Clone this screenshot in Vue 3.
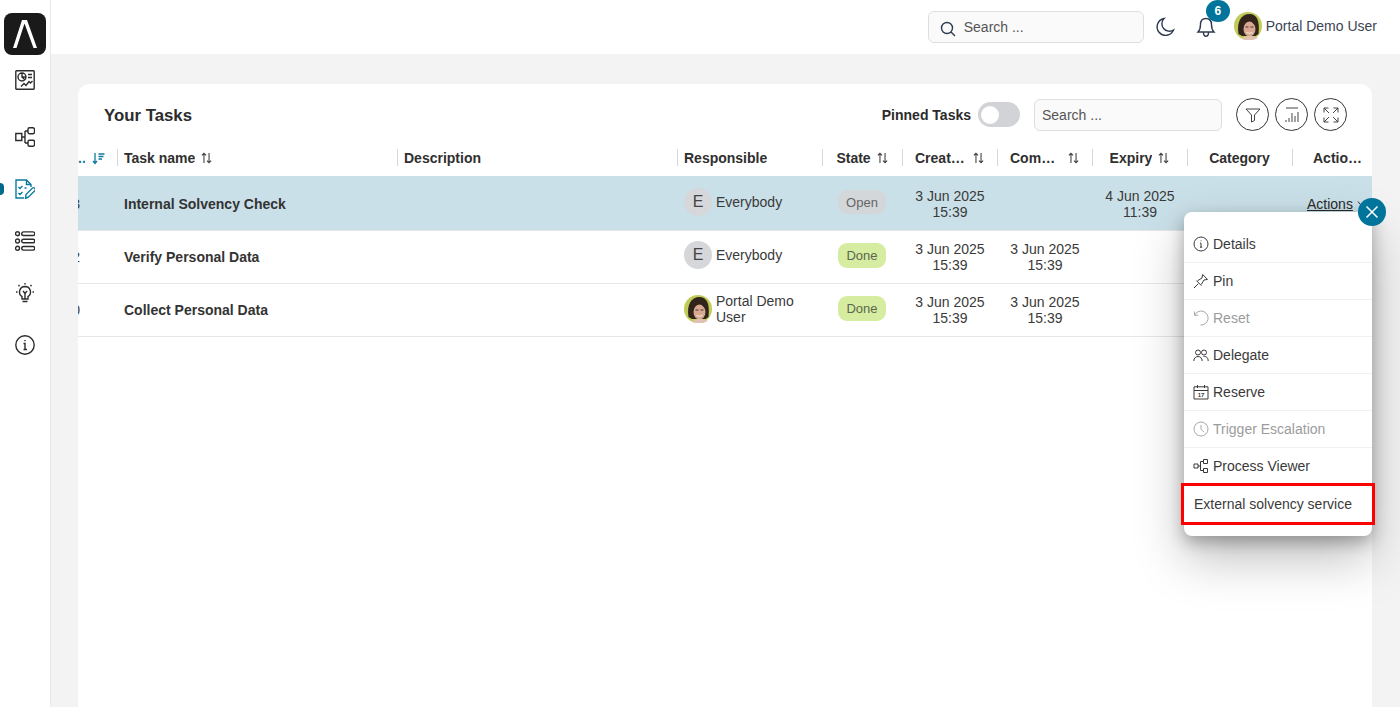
<template>
  <div class="app">
    <!-- shared portrait, used in the header and the table -->
    <svg class="defs" width="0" height="0">
      <symbol id="portrait" viewBox="0 0 28 28">
        <circle cx="14" cy="14" r="14" fill="#c0cb58" />
        <path d="M4.500 22C2.500 10 7 2 15.500 2c7 0 10.500 6 9 20l-3 2H8z" fill="#33241b" />
        <ellipse cx="15.500" cy="17" rx="6" ry="7.500" fill="#d8a892" />
        <path d="M9 15c1-4 4-5.500 7-6.500 2 2 4 3 6 6.500l1-6-5-4h-6l-4 4z" fill="#33241b" />
        <path d="M11.500 15h3M16.500 15h3" stroke="#4a3428" stroke-width="1" />
        <path d="M12.500 20.500q3 1.500 6 0" stroke="#f3e9e2" stroke-width="1" fill="none" />
        <path d="M8 27c1-2 4-3 8-3s7 1 8 2l-5 2h-8z" fill="#e0c2b2" />
      </symbol>
    </svg>

    <aside class="sidebar">
      <div class="logo">
        <svg width="24" height="30" viewBox="0 0 24 30">
          <path d="M0 29L9 1h5l10 28h-3.500L11.500 4.500 3.500 29z" fill="#fff" />
        </svg>
      </div>
      <nav class="side-nav">
        <div v-for="item in sideItems" :key="item.name" class="side-item" :class="{ active: item.active }">
          <svg width="20" height="20" viewBox="0 0 20 20" class="side-icon">
            <path :d="item.d" />
          </svg>
        </div>
      </nav>
    </aside>

    <div class="main">
      <header class="topbar">
        <div class="top-search">
          <svg width="16" height="16" viewBox="0 0 16 16" class="dark-icon search-icon">
            <path d="M7 1.500a5.500 5.500 0 1 0 0 11a5.500 5.500 0 1 0 0-11zM11 11l4 4" />
          </svg>
          <span>Search ...</span>
        </div>
        <svg width="22" height="22" viewBox="0 0 22 22" class="dark-icon moon">
          <path d="M10 2.500a8.500 8.500 0 1 0 9.500 11.500a7.500 7.500 0 0 1-9.500-11.500z" />
        </svg>
        <div class="bell">
          <svg width="22" height="22" viewBox="0 0 22 22" class="dark-icon">
            <path d="M11 2.500c-3.500 0-5.500 2.500-5.500 6c0 4-1 6-2.500 7.500h16c-1.500-1.500-2.500-3.500-2.500-7.500c0-3.500-2-6-5.500-6zM8.500 16.500c0 5 5 5 5 0" />
          </svg>
          <span class="bell-count">6</span>
        </div>
        <svg class="avatar" viewBox="0 0 28 28"><use href="#portrait" /></svg>
        <span class="user-name">Portal Demo User</span>
      </header>

      <main class="content">
        <section class="card">
          <div class="card-head">
            <h1>Your Tasks</h1>
            <span class="pinned">Pinned Tasks</span>
            <span class="toggle"><i></i></span>
            <div class="card-search">Search ...</div>
            <div class="round-btns">
              <button v-for="b in roundButtons" :key="b.name" class="round-btn">
                <svg width="18" height="18" viewBox="0 0 18 18"><path :d="b.d" /></svg>
              </button>
            </div>
          </div>

          <div class="table">
            <div class="row head">
              <div class="th th-id">
                <span class="id-dots">..</span>
                <svg width="13" height="13" viewBox="0 0 13 13" class="sort-active">
                  <path d="M3 1v10M1 9l2 2.500L5 9M6.500 2h6M6.500 4.500h5M6.500 7h3.500" />
                </svg>
              </div>
              <div v-for="col in columns" :key="col.label" class="th" :class="col.cls">
                <span class="th-label" :style="col.w ? { width: col.w + 'px' } : null">{{ col.label }}</span>
                <svg v-if="col.sort" width="11" height="12" viewBox="0 0 13 14" class="sort">
                  <path d="M3.500 13V1.500M1 4l2.500-2.500L6 4M9.500 1v11.500M7 10l2.500 2.500L12 10" />
                </svg>
              </div>
            </div>

            <div v-for="task in tasks" :key="task.id" class="row body" :class="{ selected: task.selected }">
              <div class="td td-id">{{ task.id }}</div>
              <div class="td task-name">{{ task.name }}</div>
              <div class="td"></div>
              <div class="td responsible" :class="{ photo: task.photo }">
                <svg v-if="task.photo" class="avatar" viewBox="0 0 28 28"><use href="#portrait" /></svg>
                <span v-else class="letter">E</span>
                <span>{{ task.responsible }}</span>
              </div>
              <div class="td center state-cell">
                <span class="state" :class="task.state.toLowerCase()">{{ task.state }}</span>
              </div>
              <div class="td center date">{{ task.created }}</div>
              <div class="td center date">{{ task.completed }}</div>
              <div class="td center date">{{ task.expiry }}</div>
              <div class="td"></div>
              <div class="td actions">
                <span v-if="task.selected" class="actions-link">Actions</span>
                <svg v-if="task.selected" width="10" height="8" viewBox="0 0 10 8" class="chev"><path d="M1 1.500l4 5 4-5" /></svg>
              </div>
            </div>
          </div>

          <!-- open action menu -->
          <div class="menu">
            <button class="menu-close">
              <svg width="14" height="14" viewBox="0 0 14 14"><path d="M1.500 1.500l11 11M12.500 1.500l-11 11" /></svg>
            </button>
            <div v-for="item in menuItems" :key="item.label" class="menu-item" :class="{ disabled: item.disabled }">
              <svg width="16" height="16" viewBox="0 0 16 16">
                <path :d="item.d" />
                <text v-if="item.day" x="8" y="13" text-anchor="middle" class="cal-day">{{ item.day }}</text>
              </svg>
              <span>{{ item.label }}</span>
            </div>
            <div class="menu-item external">External solvency service</div>
          </div>
        </section>
      </main>
    </div>
  </div>
</template>

<script setup>
const sideItems = [
  { name: 'dashboard', d: 'M1.500.8h17a.7.7 0 0 1 .7.7v17a.7.7 0 0 1-.7.7h-17a.7.7 0 0 1-.7-.7v-17a.7.7 0 0 1 .7-.7zM7 3a4 4 0 1 0 0 8a4 4 0 1 0 0-8zM7 3v4h4M7 7l2.800 2.800M13 4.500h4M13 7.500h4M6 16.500l3-3 2 2 3-4 1.500 1.500 2-2' },
  { name: 'process', d: 'M.8 6.500h6v7h-6zM6.800 10H10M10 4v12M10 4h3M10 16h3M14.500.8h3.500a1.500 1.500 0 0 1 1.500 1.500v3a1.500 1.500 0 0 1-1.500 1.500h-3.500a1.500 1.500 0 0 1-1.500-1.500v-3a1.500 1.500 0 0 1 1.500-1.500zM14.500 13.200h3.500a1.500 1.500 0 0 1 1.500 1.500v3a1.500 1.500 0 0 1-1.500 1.500h-3.500a1.500 1.500 0 0 1-1.500-1.500v-3a1.500 1.500 0 0 1 1.500-1.500z' },
  { name: 'tasks', active: true, d: 'M9 19H1V1h10.500L16 5.500V8M11.500 1v4.500H16M3.500 8l1.500 1.500 2.500-2.500M3.500 14l1.500 1.500 2.500-2.500M9.500 9h2M10.500 19.500l.5-4 6.500-6.500a1.800 1.800 0 0 1 2.500 2.500l-6.500 6.500z' },
  { name: 'list', d: 'M2.500.7a2 2 0 1 0 0 4a2 2 0 1 0 0-4zM2.500 8a2 2 0 1 0 0 4a2 2 0 1 0 0-4zM2.500 15.300a2 2 0 1 0 0 4a2 2 0 1 0 0-4zM8.500.9h9.500a1.800 1.800 0 0 1 0 3.600h-9.500a1.800 1.800 0 0 1 0-3.600zM8.500 8.200h9.500a1.800 1.800 0 0 1 0 3.600h-9.500a1.800 1.800 0 0 1 0-3.600zM8.500 15.500h9.500a1.800 1.800 0 0 1 0 3.600h-9.500a1.800 1.800 0 0 1 0-3.600z' },
  { name: 'ideas', d: 'M10 3.500a5.500 5.500 0 0 0-3 10.100V16h6v-2.400a5.500 5.500 0 0 0-3-10.100zM7.500 18.500h5M8 8l2 2.500L12 8M10 10.500V16M10 0v1.500M3.500 2l1 1.200M16.500 2l-1 1.200M1 9h1.500M17.500 9H19' },
  { name: 'info', d: 'M10 .8a9.200 9.200 0 1 0 0 18.400a9.200 9.200 0 1 0 0-18.400zM8.500 8.500H10v6M8.500 14.500h3.500M10 5v1.300' },
]

const roundButtons = [
  { name: 'filter', d: 'M2 3h14l-5.500 6v5.500l-3 1.500V9z' },
  { name: 'columns', d: 'M3 2h12M3 16v-2M6 16v-4M9 16V7M12 16v-6M15 16V6' },
  { name: 'expand', d: 'M2 2h4.500M2 2v4.500M2 2l5 5M16 2h-4.500M16 2v4.500M16 2l-5 5M2 16h4.500M2 16v-4.500M2 16l5-5M16 16h-4.500M16 16v-4.500M16 16l-5-5' },
]

const columns = [
  { label: 'Task name', cls: 'left', sort: true },
  { label: 'Description', cls: 'left' },
  { label: 'Responsible', cls: 'left' },
  { label: 'State', sort: true },
  { label: 'Created on', sort: true, w: 52 },
  { label: 'Completed on', sort: true, w: 52 },
  { label: 'Expiry', sort: true },
  { label: 'Category' },
  { label: 'Actions', w: 50 },
]

const tasks = [
  { id: '3', name: 'Internal Solvency Check', responsible: 'Everybody', state: 'Open', created: '3 Jun 2025\n15:39', completed: '', expiry: '4 Jun 2025\n11:39', selected: true },
  { id: '2', name: 'Verify Personal Data', responsible: 'Everybody', state: 'Done', created: '3 Jun 2025\n15:39', completed: '3 Jun 2025\n15:39', expiry: '' },
  { id: '0', name: 'Collect Personal Data', responsible: 'Portal Demo User', photo: true, state: 'Done', created: '3 Jun 2025\n15:39', completed: '3 Jun 2025\n15:39', expiry: '' },
]

const menuItems = [
  { label: 'Details', d: 'M8 1a7 7 0 1 0 0 14a7 7 0 1 0 0-14zM7 7.200h1v4M7 11.200h2.200M8 4.500v.8' },
  { label: 'Pin', d: 'M1 15l4.200-4.200M3.400 7.600l5 5M4.500 7.800L9 5l.6-3.500 4.900 4.900-3.500.6-2.800 4.500' },
  { label: 'Reset', disabled: true, d: 'M1.500 1.500v3.800h3.800M1.700 5.200A7 7 0 1 1 7.500 15' },
  { label: 'Delegate', d: 'M5 3a2.500 2.500 0 1 0 0 5a2.500 2.500 0 1 0 0-5zM11 3a2.500 2.500 0 1 0 0 5a2.500 2.500 0 1 0 0-5zM.8 14c0-6 8.400-6 8.400 0M10.500 9.500c2.500-.5 4.700 1 4.700 4.500' },
  { label: 'Reserve', day: '17', d: 'M1 2.800h14V15H1zM1 6.500h14M4.500 1v3M11.500 1v3' },
  { label: 'Trigger Escalation', disabled: true, d: 'M8 1a7 7 0 1 0 0 14a7 7 0 1 0 0-14zM8 4v4.200l3 3' },
  { label: 'Process Viewer', d: 'M1 6h4v4H1zM10.500 1.500h4v4h-4zM10.500 10.500h4v4h-4zM5 8h2.500M7.500 3.500v9M7.500 3.500h3M7.500 12.500h3' },
]
</script>

<style>
html,
body {
  margin: 0;
  height: 100%;
  overflow: hidden;
}
</style>

<style scoped>
.app {
  display: flex;
  height: 707px;
  overflow: hidden;
  background: #f3f3f3;
  font-family: "Liberation Sans", Arial, sans-serif;
  font-size: 14px;
  color: #333;
}

.defs {
  position: absolute;
}

.sidebar {
  width: 50px;
  flex: none;
  background: #fff;
  border-right: 1px solid #e8e8e8;
  padding-top: 13px;
}

.logo {
  width: 42px;
  height: 42px;
  margin-left: 4px;
  background: #1a1a1a;
  border-radius: 8px;
  display: flex;
  align-items: center;
  justify-content: center;
}

.side-nav {
  margin-top: -1px;
}

.side-item {
  position: relative;
  height: 52px;
  display: flex;
  align-items: center;
  justify-content: center;
  color: #2c2c2c;
}

.side-item:first-child {
  margin-bottom: 5px;
}

.side-item.active {
  color: #0b7a9e;
}

.side-item.active::before {
  content: "";
  position: absolute;
  left: 0;
  top: 20px;
  width: 4px;
  height: 12px;
  border-radius: 0 4px 4px 0;
  background: #00698c;
}

.side-icon path {
  fill: none;
  stroke: currentColor;
  stroke-width: 1.400;
}

.main {
  flex: 1;
  min-width: 0;
  display: flex;
  flex-direction: column;
}

.topbar {
  height: 54px;
  flex: none;
  box-sizing: border-box;
  padding: 0 23px 2px 0;
  background: #fff;
  display: flex;
  align-items: center;
  justify-content: flex-end;
  color: #3b4454;
}

.dark-icon path {
  fill: none;
  stroke: #2d3a50;
  stroke-width: 1.400;
}

.top-search {
  width: 216px;
  height: 32px;
  box-sizing: border-box;
  border: 1px solid #dcdfe2;
  border-radius: 6px;
  background: #fafafa;
  display: flex;
  align-items: center;
  gap: 8px;
  padding: 0 0 0 11px;
  margin: 2px 10px 0 0;
  color: #555;
}

.search-icon {
  margin-top: 4px;
}

.moon {
  margin: 2px 19px 0 0;
}

.bell {
  position: relative;
  width: 22px;
  height: 22px;
  margin: 2px 17px 0 0;
}

.bell-count {
  position: absolute;
  left: 11px;
  top: -16px;
  width: 24px;
  height: 22px;
  border-radius: 50%;
  background: #00749a;
  color: #fff;
  font-size: 12px;
  font-weight: 700;
  display: flex;
  align-items: center;
  justify-content: center;
}

.avatar {
  width: 28px;
  height: 28px;
  flex: none;
}

.user-name {
  margin-left: 4px;
}

.content {
  flex: 1;
  min-height: 0;
  padding: 30px 28px 0 27px;
}

.card {
  position: relative;
  height: 100%;
  background: #fff;
  border-radius: 12px 12px 0 0;
}

.card-head {
  height: 57px;
  display: flex;
  align-items: center;
  padding: 4px 25px 0 26px;
  box-sizing: border-box;
}

.card-head h1 {
  margin: 2px auto 0 0;
  font-size: 16.800px;
  font-weight: 700;
  color: #2b2b2b;
}

.pinned {
  font-weight: 700;
  color: #2b2b2b;
}

.toggle {
  width: 42px;
  height: 25px;
  margin: 0 14px 0 7px;
  border-radius: 13px;
  background: #d1d3d7;
  display: flex;
  align-items: center;
  padding-left: 3px;
  box-sizing: border-box;
}

.toggle i {
  width: 18px;
  height: 18px;
  border-radius: 50%;
  background: #fff;
}

.card-search {
  width: 188px;
  height: 32px;
  box-sizing: border-box;
  border: 1px solid #dcdfe2;
  border-radius: 6px;
  background: #fafafa;
  padding-left: 7px;
  line-height: 30px;
  color: #555;
}

.round-btns {
  display: flex;
  gap: 6px;
  margin-left: 14px;
}

.round-btn {
  width: 33px;
  height: 33px;
  padding: 0;
  border: 1px solid #333;
  border-radius: 50%;
  background: #fff;
  display: flex;
  align-items: center;
  justify-content: center;
}

.round-btn path {
  fill: none;
  stroke: #444;
  stroke-width: 1;
}

.table {
  overflow: hidden;
}

.row {
  display: grid;
  grid-template-columns: 40px 280px 280px 145px 80px 95px 95px 95px 105px 92px;
}

.row.head {
  height: 35px;
  padding-bottom: 1px;
  box-sizing: border-box;
  align-items: center;
}

.th {
  position: relative;
  display: flex;
  align-items: center;
  justify-content: center;
  gap: 6px;
  height: 20px;
  padding-right: 2px;
  box-sizing: border-box;
  font-weight: 700;
  color: #2f2f2f;
  white-space: nowrap;
}

.th::before {
  content: "";
  position: absolute;
  left: -1px;
  top: 1px;
  height: 17px;
  width: 1px;
  background: #d8d8d8;
}

.th.left {
  justify-content: flex-start;
  padding-left: 6px;
}

.th-id {
  justify-content: flex-start;
  gap: 7px;
}

.th-id::before {
  display: none;
}

.id-dots {
  color: #0b7a9e;
  width: 7px;
  overflow: hidden;
}

.th-label {
  overflow: hidden;
  text-overflow: ellipsis;
}

.sort path,
.sort-active path {
  fill: none;
  stroke: #444;
  stroke-width: 1.300;
}

.sort-active path {
  stroke: #0b7a9e;
}

.row.body {
  height: 53px;
  box-sizing: border-box;
  border-bottom: 1px solid #e6e6e6;
}

.row.body.selected {
  height: 55px;
  padding-top: 2px;
  background: #cae0e8;
}

.td {
  display: flex;
  align-items: center;
  min-width: 0;
  color: #3a3a3a;
}

.td-id {
  position: relative;
  left: -38px;
  justify-content: flex-end;
}

.task-name {
  padding-left: 6px;
  font-weight: 700;
  color: #333;
}

.responsible {
  gap: 4px;
  padding: 0 20px 4px 6px;
  line-height: 16px;
}

.responsible.photo {
  padding-bottom: 2px;
}

.letter {
  width: 28px;
  height: 28px;
  flex: none;
  border-radius: 50%;
  background: #d5d7db;
  display: flex;
  align-items: center;
  justify-content: center;
  font-size: 16px;
  color: #444;
}

.center {
  justify-content: center;
  text-align: center;
}

.date {
  white-space: pre-line;
  line-height: 16px;
  padding-right: 1px;
}

.state-cell {
  padding-right: 2px;
}

.state {
  width: 48px;
  height: 25px;
  border-radius: 9px;
  font-size: 13px;
  display: flex;
  align-items: center;
  justify-content: center;
  margin-bottom: 3px;
}

.state.open {
  height: 24px;
  margin-bottom: 4px;
  background: #d3d7d9;
  color: #666;
}

.state.done {
  background: #d6eca0;
  color: #5c6650;
}

.actions {
  padding-left: 14px;
  gap: 4px;
}

.actions-link {
  text-decoration: underline;
  color: #2b2b2b;
}

.chev path {
  fill: none;
  stroke: #333;
}

.menu {
  position: absolute;
  top: 128px;
  right: 0;
  width: 188px;
  height: 324px;
  box-sizing: border-box;
  padding-top: 14px;
  background: #fff;
  border-radius: 8px;
  box-shadow: 0 6px 16px rgba(0, 0, 0, 0.28), 0 22px 50px rgba(0, 0, 0, 0.26);
}

.menu-close {
  position: absolute;
  top: -14px;
  right: -14px;
  width: 28px;
  height: 28px;
  padding: 0;
  border: 0;
  border-radius: 50%;
  background: #00749a;
  display: flex;
  align-items: center;
  justify-content: center;
}

.menu-close path {
  fill: none;
  stroke: #fff;
  stroke-width: 1.500;
}

.menu-item {
  height: 37px;
  box-sizing: border-box;
  border-bottom: 1px solid #f1f1f1;
  padding-left: 9px;
  display: flex;
  align-items: center;
  gap: 4px;
  color: #3a3a3a;
}

.menu-item svg {
  flex: none;
}

.menu-item path {
  fill: none;
  stroke: #3a3a3a;
}

.cal-day {
  font-family: "Liberation Sans", Arial, sans-serif;
  font-size: 6px;
  font-weight: 700;
  fill: #3a3a3a;
}

.menu-item.disabled {
  color: #9c9c9c;
}

.menu-item.disabled path {
  stroke: #a8a8a8;
}

.menu-item.external {
  width: 194px;
  height: 42px;
  margin: -2px 0 0 -3px;
  padding-left: 10px;
  border: 3px solid #f00;
}
</style>
